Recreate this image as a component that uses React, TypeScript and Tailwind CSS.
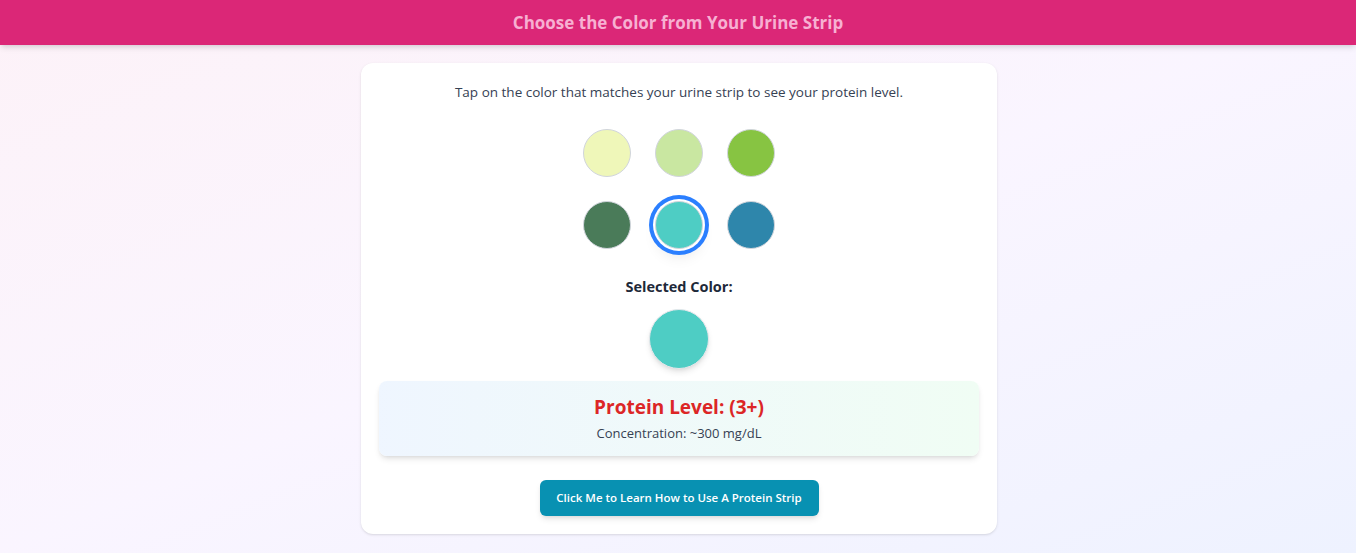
import { useState } from "react";

const COLORS = [
  { hex: "#eff7b9", level: "Negative", conc: "0 mg/dL" },
  { hex: "#c9e7a1", level: "Trace", conc: "~15 mg/dL" },
  { hex: "#87c442", level: "(1+)", conc: "~30 mg/dL" },
  { hex: "#4a7b59", level: "(2+)", conc: "~100 mg/dL" },
  { hex: "#4ecdc4", level: "(3+)", conc: "~300 mg/dL" },
  { hex: "#2e86ab", level: "(4+)", conc: "~2000 mg/dL" },
];

export default function App() {
  const [selected, setSelected] = useState(4);
  const current = COLORS[selected];

  return (
    <div
      className="min-h-[553px] bg-gradient-to-br from-pink-50 via-purple-50 to-indigo-50"
      style={{ fontFamily: '"Open Sans", "Noto Sans", sans-serif' }}
    >
      <header className="h-[45px] bg-[#db2777] shadow-md flex items-center justify-center">
        <h1 className="text-[17px] font-bold text-[#f7b0d2]">Choose the Color from Your Urine Strip</h1>
      </header>

      <div className="flex justify-center pt-[18px] pb-4 pl-[2px]">
        <div className="w-[636px] bg-white rounded-xl shadow-sm p-[18px] flex flex-col items-center">
          <p className="text-[13.5px] leading-5 text-gray-700 mt-[1px]">
            Tap on the color that matches your urine strip to see your protein level.
          </p>

          <div className="grid grid-cols-3 gap-6 mt-[27px]">
            {COLORS.map((c, i) => (
              <button
                key={c.hex}
                onClick={() => setSelected(i)}
                className={
                  i === selected
                    ? "w-12 h-12 rounded-full border border-gray-300 ring-4 ring-offset-2 ring-blue-500 shadow-lg"
                    : "w-12 h-12 rounded-full border border-gray-300"
                }
                style={{ backgroundColor: c.hex }}
              />
            ))}
          </div>

          <h2 className="mt-[26px] text-[14.5px] leading-6 font-bold text-gray-800">Selected Color:</h2>
          <div
            className="mt-[10px] w-[60px] h-[60px] rounded-full border border-gray-200 shadow-md"
            style={{ backgroundColor: current.hex }}
          />

          <div className="mt-3 w-full h-[75px] rounded-lg bg-gradient-to-r from-blue-50 to-green-50 shadow-md flex flex-col items-center justify-center">
            <h3 className="text-[19px] leading-6 font-bold text-[#dc2626]">Protein Level: {current.level}</h3>
            <p className="mt-1 text-[13px] leading-5 text-gray-700">Concentration: {current.conc}</p>
          </div>

          <button className="mt-6 h-9 w-[279px] rounded-md bg-[#0891b2] text-white text-[11.5px] font-semibold shadow-md">
            Click Me to Learn How to Use A Protein Strip
          </button>
        </div>
      </div>
    </div>
  );
}
